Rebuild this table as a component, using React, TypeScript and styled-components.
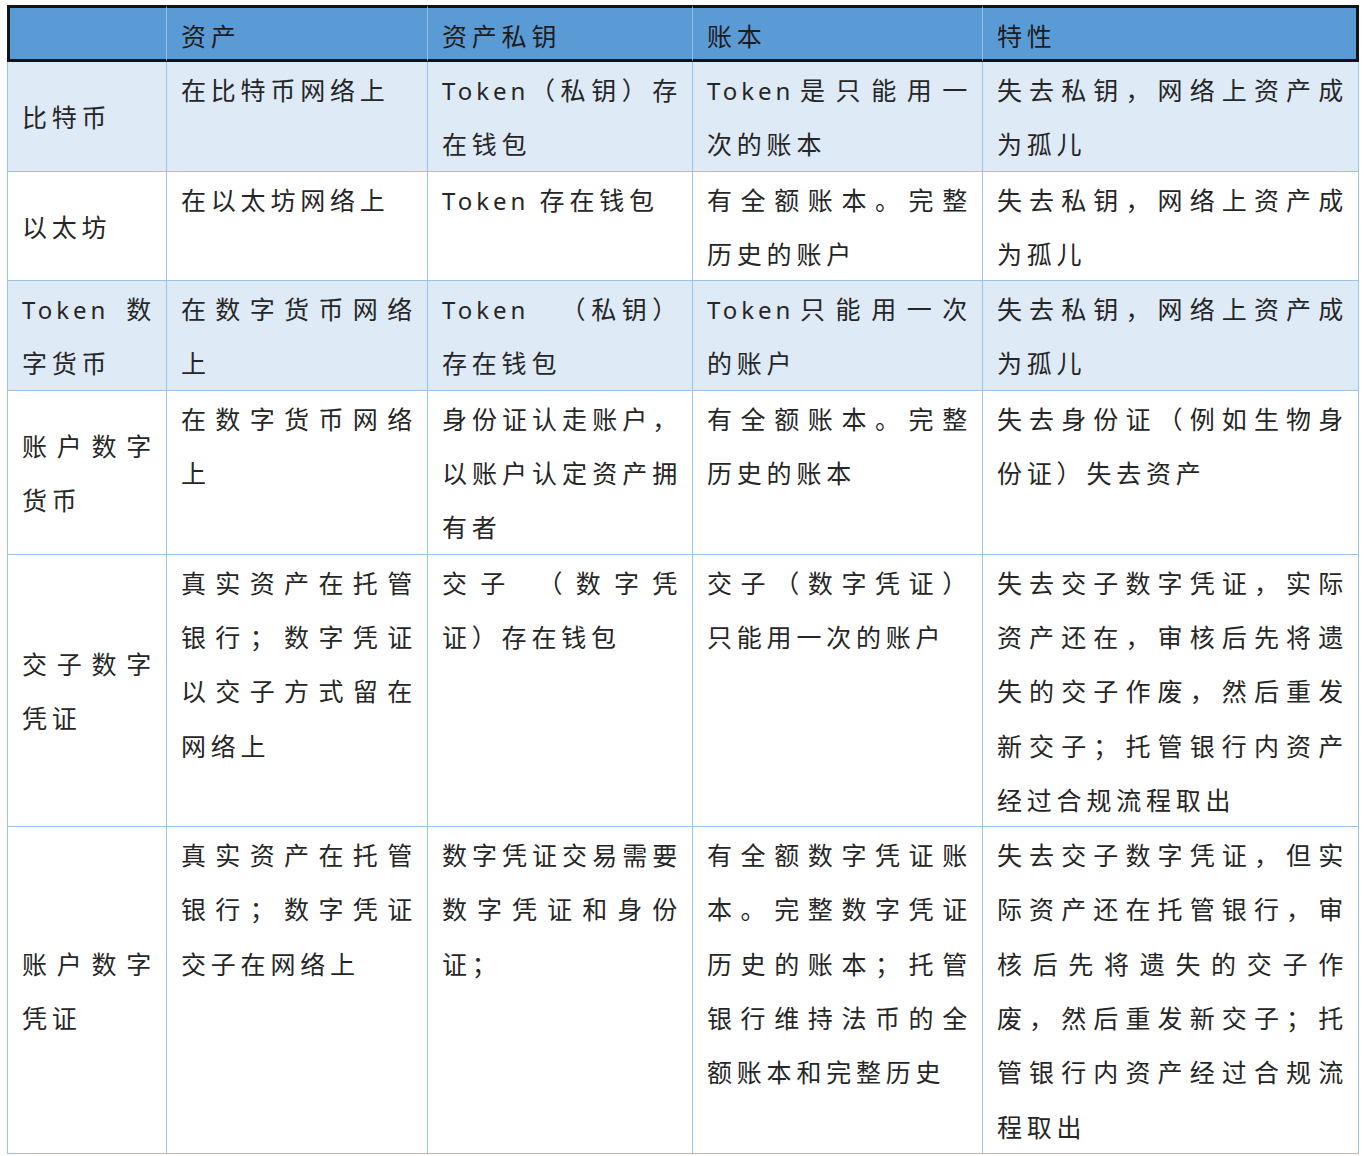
import styled, { createGlobalStyle } from "styled-components";
import type { ReactNode } from "react";

const GlobalStyle = createGlobalStyle`
  html, body {
    margin: 0;
    padding: 0;
    background: #ffffff;
  }
  body {
    font-family: "Noto Sans CJK SC", "Noto Sans", sans-serif;
  }
`;

const Page = styled.div`
  padding: 5px 0 0 7px;
`;

const Table = styled.table`
  width: 1352px;
  table-layout: fixed;
  border-collapse: separate;
  border-spacing: 0;
  font-family: "Noto Sans CJK SC", sans-serif;
  font-size: 25px;
  letter-spacing: 4.8px;
  color: #262626;
  text-spacing-trim: space-all;
`;

const Col = styled.col<{ $w: number }>`
  width: ${(p) => p.$w}px;
`;

const HeadCell = styled.th<{ $first?: boolean; $last?: boolean }>`
  background: #5b9bd5;
  border-top: 3px solid #141414;
  border-bottom: 3px solid #141414;
  border-left: ${(p) => (p.$first ? "3px solid #141414" : "none")};
  border-right: ${(p) => (p.$last ? "3px solid #141414" : "1px solid #94bde6")};
  padding: 3px 10px 0 14px;
  line-height: 48px;
  text-align: left;
  font-weight: 400;
  vertical-align: top;
  color: #1c1c1c;
`;

const Row = styled.tr<{ $shade?: boolean }>`
  background: ${(p) => (p.$shade ? "#deeaf6" : "#ffffff")};
`;

const Cell = styled.td<{ $lead?: boolean }>`
  border-right: 1px solid #9cc2e5;
  border-bottom: 1px solid #9cc2e5;
  border-left: ${(p) => (p.$lead ? "1px solid #9cc2e5" : "none")};
  padding: 0 10px 0 14px;
  line-height: 54.3px;
  text-align: justify;
  vertical-align: ${(p) => (p.$lead ? "middle" : "top")};
`;

// latin words sit tighter than the CJK text around them
const Latin = styled.span`
  font-family: "Noto Sans", sans-serif;
  font-size: 24px;
  line-height: 24px;
  letter-spacing: 4px;
`;

const widths = [160, 261, 265, 290, 376];
const headers = ["", "资产", "资产私钥", "账本", "特性"];

const orphan = "失去私钥，网络上资产成为孤儿";

const rows: { shade?: boolean; cells: ReactNode[] }[] = [
  {
    shade: true,
    cells: [
      "比特币",
      "在比特币网络上",
      <><Latin>Token</Latin>（私钥）存在钱包</>,
      <><Latin>Token</Latin>是只能用一次的账本</>,
      orphan,
    ],
  },
  {
    cells: [
      "以太坊",
      "在以太坊网络上",
      <><Latin>Token </Latin>存在钱包</>,
      "有全额账本。完整历史的账户",
      orphan,
    ],
  },
  {
    shade: true,
    cells: [
      <><Latin>Token </Latin>数字货币</>,
      "在数字货币网络上",
      <><Latin>Token</Latin>　（私钥）存在钱包</>,
      <><Latin>Token</Latin>只能用一次的账户</>,
      orphan,
    ],
  },
  {
    cells: [
      "账户数字货币",
      "在数字货币网络上",
      "身份证认走账户，以账户认定资产拥有者",
      "有全额账本。完整历史的账本",
      "失去身份证（例如生物身份证）失去资产",
    ],
  },
  {
    cells: [
      "交子数字凭证",
      "真实资产在托管银行；数字凭证以交子方式留在网络上",
      "交子 （数字凭证）存在钱包",
      "交子（数字凭证）只能用一次的账户",
      "失去交子数字凭证，实际资产还在，审核后先将遗失的交子作废，然后重发新交子；托管银行内资产经过合规流程取出",
    ],
  },
  {
    cells: [
      "账户数字凭证",
      "真实资产在托管银行；数字凭证交子在网络上",
      "数字凭证交易需要数字凭证和身份证；",
      "有全额数字凭证账本。完整数字凭证历史的账本；托管银行维持法币的全额账本和完整历史",
      "失去交子数字凭证，但实际资产还在托管银行，审核后先将遗失的交子作废，然后重发新交子；托管银行内资产经过合规流程取出",
    ],
  },
];

export default function App() {
  return (
    <Page lang="zh-CN">
      <GlobalStyle />
      <Table>
        <colgroup>
          {widths.map((w, i) => (
            <Col key={i} $w={w} />
          ))}
        </colgroup>
        <thead>
          <tr>
            {headers.map((h, i) => (
              <HeadCell key={i} $first={i === 0} $last={i === headers.length - 1}>
                {h}
              </HeadCell>
            ))}
          </tr>
        </thead>
        <tbody>
          {rows.map((row, r) => (
            <Row key={r} $shade={row.shade}>
              {row.cells.map((cell, c) => (
                <Cell key={c} $lead={c === 0}>
                  {cell}
                </Cell>
              ))}
            </Row>
          ))}
        </tbody>
      </Table>
    </Page>
  );
}
